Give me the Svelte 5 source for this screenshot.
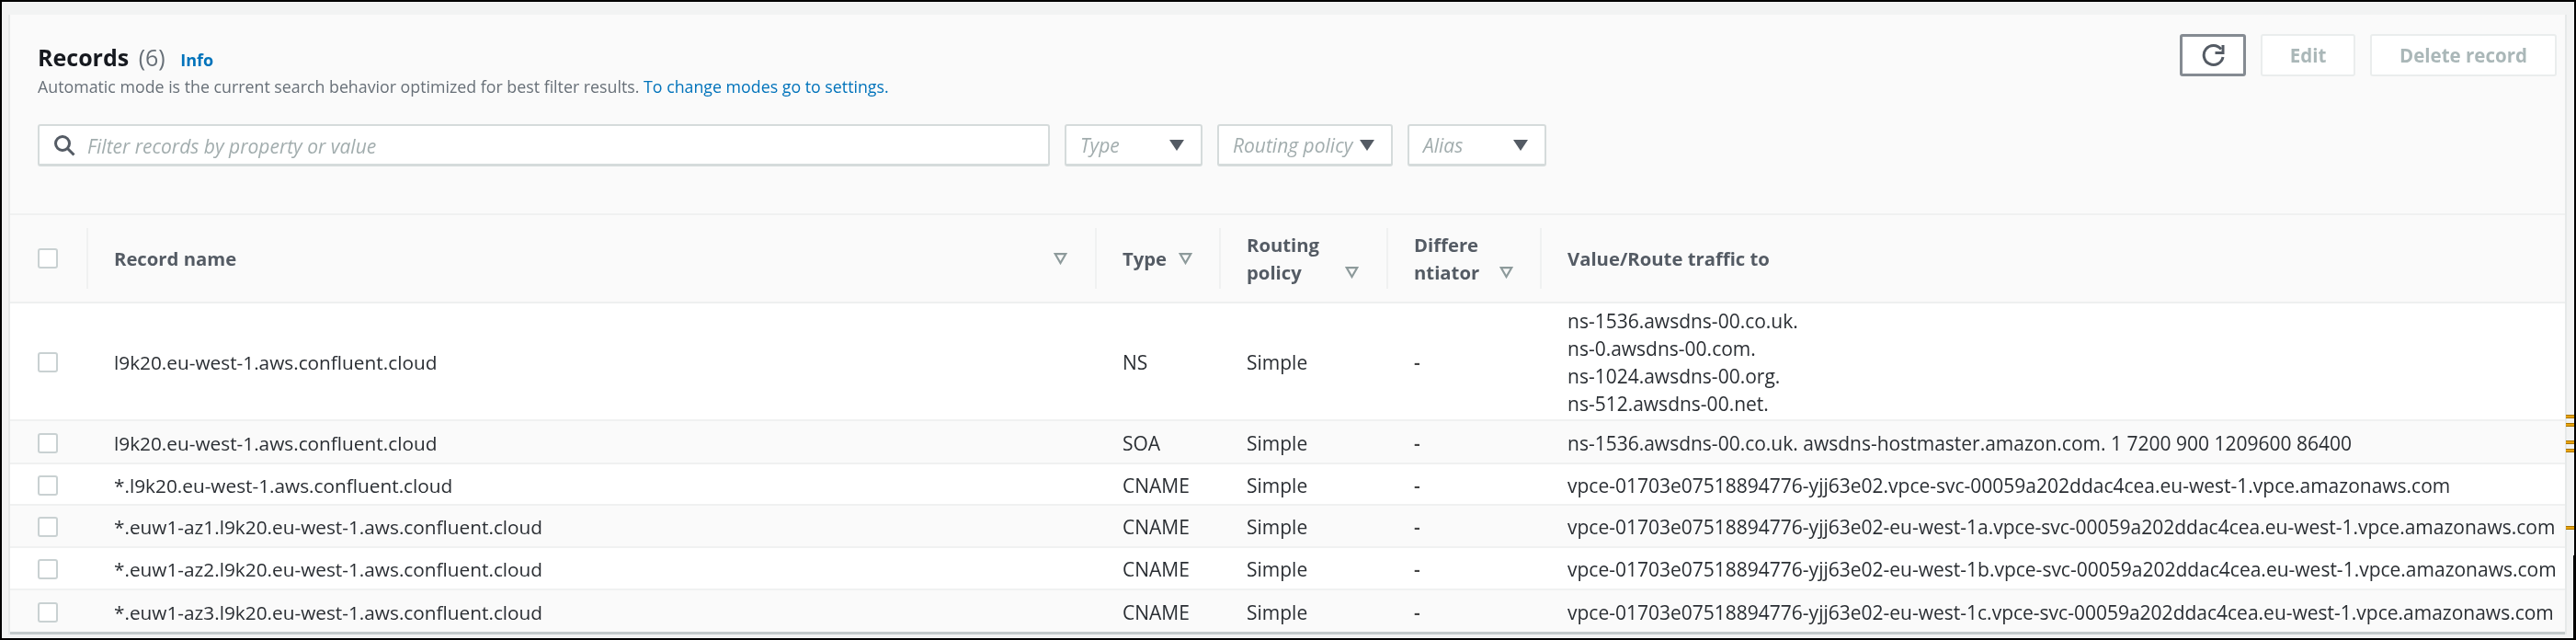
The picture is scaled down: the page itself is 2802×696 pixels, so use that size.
<script>
  const nsValues = ['ns-1536.awsdns-00.co.uk.', 'ns-0.awsdns-00.com.', 'ns-1024.awsdns-00.org.', 'ns-512.awsdns-00.net.'];
  const vpce = 'vpce-01703e07518894776-yjj63e02';
  const svc = 'vpce-svc-00059a202ddac4cea.eu-west-1.vpce.amazonaws.com';
  const zone = 'l9k20.eu-west-1.aws.confluent.cloud';

  const records = [
    { name: zone, type: 'NS', value: nsValues, h: 128 },
    { name: zone, type: 'SOA', value: ['ns-1536.awsdns-00.co.uk. awsdns-hostmaster.amazon.com. 1 7200 900 1209600 86400'], h: 47 },
    { name: '*.' + zone, type: 'CNAME', value: [`${vpce}.${svc}`], h: 45 },
    { name: '*.euw1-az1.' + zone, type: 'CNAME', value: [`${vpce}-eu-west-1a.${svc}`], h: 46 },
    { name: '*.euw1-az2.' + zone, type: 'CNAME', value: [`${vpce}-eu-west-1b.${svc}`], h: 46 },
    { name: '*.euw1-az3.' + zone, type: 'CNAME', value: [`${vpce}-eu-west-1c.${svc}`], h: 45 }
  ];

  const ticks = [453, 462, 481, 490, 574];
</script>

{#snippet sort(cls)}
  <svg class="sort {cls}" viewBox="0 0 15 13" width="15" height="13" fill="none" stroke="#8d9a9b" stroke-width="2.2">
    <path d="M1.8 1.2 H13.2 L7.5 11 Z"/>
  </svg>
{/snippet}

<div class="frame">
  <section class="card">
    <header class="head">
      <div class="head-top">
        <div class="titles">
          <h2>Records <span class="count">(6)</span> <a href="#info" class="info">Info</a></h2>
          <p>Automatic mode is the current search behavior optimized for best filter results. <a href="#settings">To change modes go to settings.</a></p>
        </div>
        <div class="actions">
          <button class="btn refresh" aria-label="Refresh">
            <svg viewBox="0 0 28 26" width="28" height="26" fill="none" stroke="#545b64" stroke-width="3">
              <path d="M23 6.5 A10.5 10.5 0 1 0 25 15"/>
              <path d="M25 2 V10.5 H16.5"/>
            </svg>
          </button>
          <button class="btn edit" disabled>Edit</button>
          <button class="btn delete" disabled>Delete record</button>
        </div>
      </div>
      <div class="filters">
        <div class="search">
          <svg viewBox="0 0 24 24" width="24" height="24" fill="none" stroke="#545b64" stroke-width="3">
            <circle cx="10" cy="10" r="7.5"/>
            <path d="M15.5 15.5 L22.5 22.5"/>
          </svg>
          <span>Filter records by property or value</span>
        </div>
        <div class="select w-type"><span>Type</span><i class="caret"></i></div>
        <div class="select w-routing"><span>Routing policy</span><i class="caret"></i></div>
        <div class="select w-alias"><span>Alias</span><i class="caret"></i></div>
      </div>
    </header>

    <div class="row header-row">
      <div class="cell check"><span class="box"></span></div>
      <div class="cell name between"><b>Record name</b>{@render sort('')}</div>
      <div class="cell type"><b>Type</b>{@render sort('s-type')}</div>
      <div class="cell routing"><b class="wrap">Routing<br />policy</b>{@render sort('s-routing low')}</div>
      <div class="cell diff"><b class="wrap">Differe<br />ntiator</b>{@render sort('s-diff low')}</div>
      <div class="cell value"><b>Value/Route traffic to</b></div>
    </div>

    {#each records as rec, i}
      <div class="row" class:odd={i % 2 === 1} style="height: {rec.h}px">
        <div class="cell check"><span class="box"></span></div>
        <div class="cell name">{rec.name}</div>
        <div class="cell type">{rec.type}</div>
        <div class="cell routing">Simple</div>
        <div class="cell diff dash">-</div>
        <div class="cell value stack">
          {#each rec.value as line}<div>{line}</div>{/each}
        </div>
      </div>
    {/each}
  </section>

  {#each ticks as y}
    <span class="tick" style="top: {y - 3}px"></span>
  {/each}
  <span class="edge"></span>
</div>

<style>
  :global(body) {
    margin: 0;
    background: #000;
    font-family: "Open Sans", "Noto Sans", sans-serif;
  }
  .frame {
    position: relative;
    box-sizing: border-box;
    width: 2802px;
    height: 696px;
    border: 2px solid #000;
    background: #f2f3f3;
    padding: 14px 10px 0 9px;
    overflow: hidden;
    filter: blur(0.5px);
  }
  .card {
    background: #fff;
    border-bottom: 3px solid #c3cacb;
    box-shadow: -2px 0 0 #e6e9e9, 2px 0 0 #e6e9e9;
  }
  .head {
    background: #fafafa;
    height: 218px;
    box-sizing: border-box;
    padding: 21px 9px 0 30px;
    border-bottom: 2px solid #f0f1f1;
  }
  .head-top {
    display: flex;
    justify-content: space-between;
    height: 98px;
  }
  h2 {
    margin: 0;
    font-size: 25px;
    line-height: 36px;
    font-weight: 700;
    color: #16191f;
    padding-top: 7px;
  }
  .count { font-weight: 400; color: #687078; margin-left: 4px; }
  .info {
    font-size: 18px;
    font-weight: 700;
    color: #0073bb;
    text-decoration: none;
    margin-left: 10px;
  }
  .titles p {
    margin: -1px 0 0;
    font-size: 17.8px;
    line-height: 24px;
    color: #687078;
  }
  .titles p a { color: #0073bb; text-decoration: none; }
  .actions { display: flex; gap: 16px; align-items: flex-start; }
  .btn {
    box-sizing: border-box;
    height: 46px;
    font: 700 20.5px "Open Sans", sans-serif;
    background: #fff;
    border: 2px solid #eaeded;
    border-radius: 3px;
    color: #aab7b8;
    display: flex;
    align-items: center;
    justify-content: center;
    padding: 0;
  }
  .refresh { width: 72px; border: 3px solid #858b92; }
  .edit { width: 103px; }
  .delete { width: 203px; }
  .filters { display: flex; gap: 16px; }
  .search, .select {
    box-sizing: border-box;
    height: 46px;
    background: #fff;
    border: 2px solid #d5dbdb;
    border-bottom-width: 3px;
    border-radius: 3px;
    display: flex;
    align-items: center;
    font-size: 21px;
    font-style: italic;
    color: #a2adae;
  }
  .search { width: 1101px; padding-left: 15px; gap: 13px; }
  .search span { padding-top: 2px; }
  .select { padding: 0 18px 0 15px; justify-content: space-between; }
  .w-type { width: 150px; }
  .w-routing { width: 191px; }
  .w-alias { width: 151px; }
  .caret {
    width: 0; height: 0;
    border-left: 8px solid transparent;
    border-right: 8px solid transparent;
    border-top: 12px solid #545b64;
  }
  .row {
    display: grid;
    grid-template-columns: 83px 1097px 135px 182px 167px 1fr;
    border-bottom: 2px solid #f0f1f1;
    box-sizing: border-box;
    font-size: 21px;
    color: #2a2e33;
  }
  .row:last-child { border-bottom: 0; }
  .row.odd { background: #fafafa; }
  .header-row {
    height: 96px;
    font-size: 20.3px;
    background: #fafafa;
    color: #545b64;
    border-bottom: 2px solid #eef0f0;
  }
  .cell {
    display: flex;
    align-items: center;
    padding: 2px 0 0 30px;
    min-width: 0;
    position: relative;
    white-space: nowrap;
  }
  .name { font-size: 20.8px; }
  .box {
    box-sizing: border-box;
    width: 22px; height: 22px;
    background: #fff;
    border: 2px solid #c9d1d2;
    border-radius: 3px;
  }
  .header-row .cell { padding-top: 0; font-size: 20.3px; }
  .header-row .cell::before {
    content: "";
    position: absolute;
    left: 0; top: 14px; bottom: 14px;
    width: 2px;
    background: #f0f1f1;
  }
  .header-row .check::before { display: none; }
  .header-row b { font-weight: 700; }
  .wrap { line-height: 30px; }
  .between { justify-content: space-between; padding-right: 30px; }
  .dash { font-weight: 600; color: #444; }
  .sort { flex: none; }
  .low { margin-top: 30px; }
  .s-type { margin-left: 13px; }
  .s-routing { margin-left: 28px; }
  .s-diff { margin-left: 22px; }
  .stack { flex-direction: column; align-items: flex-start; justify-content: center; }
  .stack div { line-height: 30px; }
  .tick {
    position: absolute;
    right: 0;
    width: 9px; height: 2px;
    background: #e8a30f;
    box-shadow: 0 -1px 0 #a87400, 0 1px 0 #a87400;
  }
  .edge {
    position: absolute;
    right: 0; top: 602px; bottom: 0;
    width: 1px;
    background: #000;
  }
</style>
